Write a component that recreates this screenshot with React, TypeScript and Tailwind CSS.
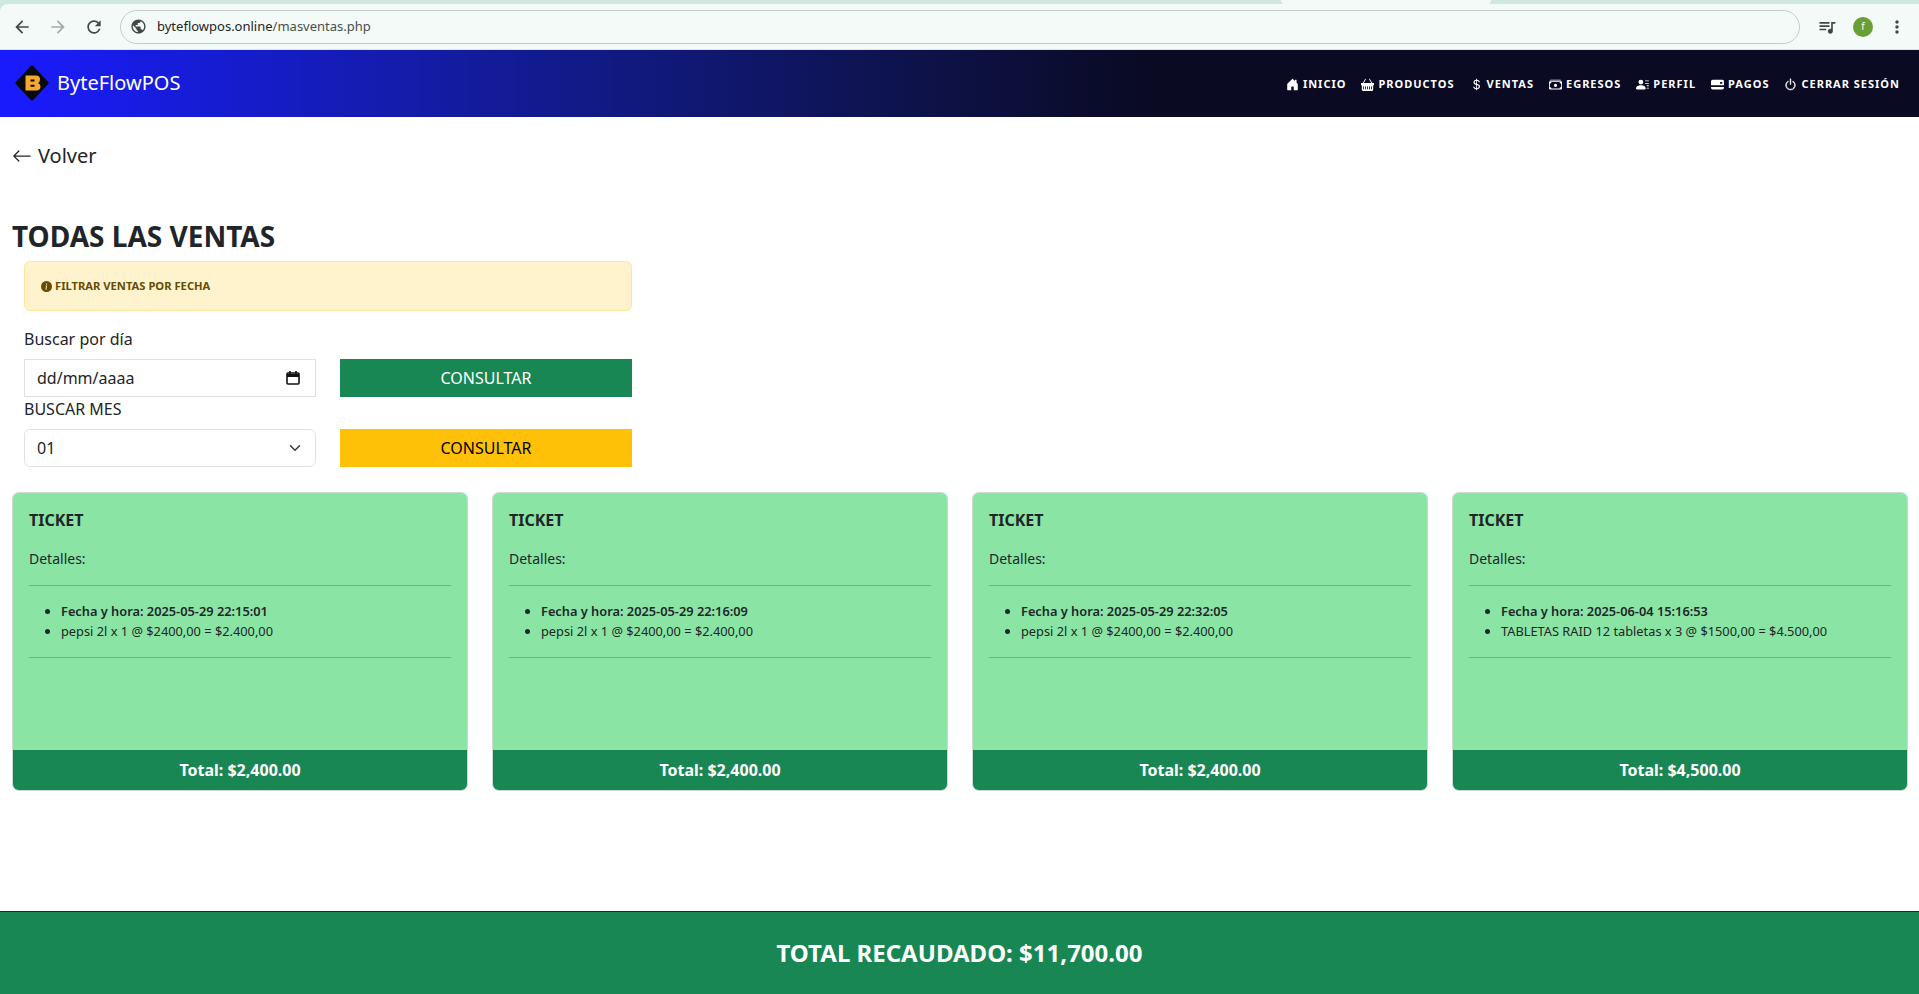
import React from 'react';
import {
  BsArrowLeft,
  BsBasketFill,
  BsCashStack,
  BsCreditCard2BackFill,
  BsCurrencyDollar,
  BsHouseDoorFill,
  BsInfoCircleFill,
  BsPersonLinesFill,
  BsPower,
} from 'react-icons/bs';
import { MdArrowBack, MdArrowForward, MdMoreVert, MdPublic, MdQueueMusic, MdRefresh } from 'react-icons/md';

const navLinks = [
  { label: 'INICIO', icon: <BsHouseDoorFill /> },
  { label: 'PRODUCTOS', icon: <BsBasketFill /> },
  { label: 'VENTAS', icon: <BsCurrencyDollar /> },
  { label: 'EGRESOS', icon: <BsCashStack /> },
  { label: 'PERFIL', icon: <BsPersonLinesFill /> },
  { label: 'PAGOS', icon: <BsCreditCard2BackFill /> },
  { label: 'CERRAR SESIÓN', icon: <BsPower className="stroke-[0.6px]" /> },
];

const tickets = [
  { date: '2025-05-29 22:15:01', item: 'pepsi 2l x 1 @ $2400,00 = $2.400,00', total: '$2,400.00' },
  { date: '2025-05-29 22:16:09', item: 'pepsi 2l x 1 @ $2400,00 = $2.400,00', total: '$2,400.00' },
  { date: '2025-05-29 22:32:05', item: 'pepsi 2l x 1 @ $2400,00 = $2.400,00', total: '$2,400.00' },
  { date: '2025-06-04 15:16:53', item: 'TABLETAS RAID 12 tabletas x 3 @ $1500,00 = $4.500,00', total: '$4,500.00' },
];

const BrowserBar = () => (
  <div className="h-[50px] bg-[#cfe8e2] pt-[4px] relative">
    {/* bottom of the active tab, cut off at the top of the shot */}
    <div className="absolute top-0 left-[1281px] w-[210px] h-[5px] bg-[#f4faf8] rounded-b-[8px]" />
    <div className="h-full bg-[#f4faf8] border-b border-[#dfe5e3] rounded-tl-[8px] flex items-center">
      <div className="flex items-center gap-[16px] pl-[12px] text-[#3f4a47] text-[20px]">
        <MdArrowBack />
        <MdArrowForward className="text-[#a4abaa]" />
        <MdRefresh />
      </div>
      <div className="ml-[16px] flex-1 h-[34px] rounded-full border border-[#c4cdca] flex items-center pl-[9px]">
        <MdPublic className="text-[17px] text-[#3f4a47]" />
        <span className="ml-[10px] text-[13px] text-[#1f2523]">
          byteflowpos.online<span className="text-[#46504d]">/masventas.php</span>
        </span>
      </div>
      <div className="flex items-center pl-[17px] pr-[12px] text-[#3f4a47]">
        <MdQueueMusic className="text-[20px]" />
        <div className="ml-[16px] w-[20px] h-[20px] rounded-full bg-[#6a9f35] text-white text-[10px] flex items-center justify-center">
          f
        </div>
        <MdMoreVert className="ml-[14px] text-[20px]" />
      </div>
    </div>
  </div>
);

const TicketCard = ({ date, item, total }: { date: string; item: string; total: string }) => (
  <div className="h-[299px] flex flex-col rounded-[7px] border border-[#cfd8d2] bg-[#8ae5a5] text-[#212529] overflow-hidden">
    <div className="flex-1 px-[16px] pt-[18px]">
      <h5 className="text-[16px] leading-[19px] font-bold">TICKET</h5>
      <p className="mt-[18px] text-[14px] leading-[21px]">Detalles:</p>
      <hr className="mt-[16px] border-[#6fb387]" />
      <ul className="mt-[15px] pl-[32px] list-disc text-[12.8px] leading-[20px]">
        <li className="font-semibold">Fecha y hora: {date}</li>
        <li>{item}</li>
      </ul>
      <hr className="mt-[16px] border-[#6fb387]" />
    </div>
    <div className="h-[40px] bg-[#198754] text-white font-bold text-[16px] flex items-center justify-center">
      Total: {total}
    </div>
  </div>
);

export default function App() {
  return (
    <div className="h-[994px] flex flex-col bg-white text-[#212529] font-['Noto_Sans',sans-serif]">
      <BrowserBar />

      <nav className="h-[67px] flex items-center justify-between bg-gradient-to-r from-[#1a1aff] to-[#0a0a23] to-[60%] pl-[15px] pr-[19px]">
        <div className="flex items-center gap-[8px] -mt-[2px]">
          <svg width="34" height="36" viewBox="0 0 34 36">
            <path d="M17 2.5 L31.5 18 L17 33.5 L2.5 18 Z" fill="#0a0a0a" stroke="#0a0a0a" strokeWidth="4" strokeLinejoin="round" />
            <path
              fillRule="evenodd"
              d="M10.5 10.5 H21 Q25 10.5 25 14.5 Q25 17 23 18 Q25.5 19 25.5 21.5 Q25.5 25.5 21 25.5 H10.5 Z M15.5 14.5 V16.5 H19.5 V14.5 Z M15.5 19.8 V21.8 H19.5 V19.8 Z"
              fill="#f5a92f"
            />
          </svg>
          <span className="text-white text-[20px]">ByteFlowPOS</span>
        </div>
        <ul className="flex items-center gap-[15px] mt-[1px]">
          {navLinks.map((link) => (
            <li key={link.label} className="flex items-center gap-[4px] text-white text-[11px] font-bold tracking-[1px]">
              <span className="text-[13px]">{link.icon}</span>
              {link.label}
            </li>
          ))}
        </ul>
      </nav>

      <div className="flex-1 flex flex-col">
        <div className="pl-[12px] pt-[24px] flex items-center gap-[6px] text-[20px] leading-[30px]">
          <BsArrowLeft />
          Volver
        </div>

        <h2 className="mt-[48px] pl-[12px] text-[28px] leading-[34px] font-bold">TODAS LAS VENTAS</h2>

        <div className="ml-[24px] mt-[8px] w-[608px]">
          <div className="h-[50px] flex items-center gap-[3px] px-[16px] rounded-[6px] border border-[#ffe69c] bg-[#fff3cd] text-[#664d03] text-[11.2px] font-bold">
            <BsInfoCircleFill className="text-[11px]" />
            FILTRAR VENTAS POR FECHA
          </div>

          <p className="mt-[16px] text-[16px] leading-[24px]">Buscar por día</p>
          <div className="mt-[8px] grid grid-cols-2 gap-[24px]">
            <div className="h-[38px] flex items-center justify-between border border-[#dee2e6] pl-[12px] pr-[14px] text-[16px]">
              dd/mm/aaaa
              <svg width="16" height="16" viewBox="0 0 16 16" fill="none" stroke="#111" strokeWidth="1.6">
                <rect x="2" y="3" width="12" height="11" rx="1" />
                <path d="M2 5.5h12" strokeWidth="3" />
                <path d="M5 1v3M11 1v3" />
              </svg>
            </div>
            <button className="h-[38px] bg-[#198754] text-white text-[16px]">CONSULTAR</button>
          </div>

          <p className="text-[16px] leading-[24px]">BUSCAR MES</p>
          <div className="mt-[8px] grid grid-cols-2 gap-[24px]">
            <div className="h-[38px] flex items-center justify-between rounded-[6px] border border-[#dee2e6] pl-[12px] pr-[14px] text-[16px]">
              01
              <svg width="12" height="12" viewBox="0 0 16 16" fill="none" stroke="#343a40" strokeWidth="2" strokeLinecap="round" strokeLinejoin="round">
                <path d="m2 5 6 6 6-6" />
              </svg>
            </div>
            <button className="h-[38px] bg-[#ffc107] text-black text-[16px]">CONSULTAR</button>
          </div>
        </div>

        <div className="mt-[25px] pl-[12px] pr-[11px] grid grid-cols-4 gap-[24px]">
          {tickets.map((ticket) => (
            <TicketCard key={ticket.date} {...ticket} />
          ))}
        </div>
      </div>

      <footer className="h-[83px] flex items-center justify-center bg-[#198754] border-t border-[#212529] text-white text-[24px] font-bold">
        TOTAL RECAUDADO: $11,700.00
      </footer>
    </div>
  );
}
